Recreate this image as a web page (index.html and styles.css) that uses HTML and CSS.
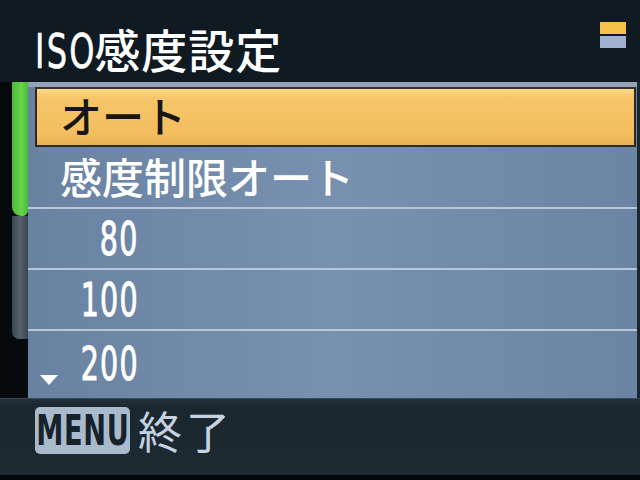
FILE: index.html
```html
<!DOCTYPE html>
<html lang="ja">
<head>
<meta charset="utf-8">
<link rel="stylesheet" href="styles.css">
</head>
<body>
<div class="screen">
  <div class="header">
    <div class="title"><span class="latin">ISO</span>感度設定</div>
    <div class="legend"><div class="sw sw-y"></div><div class="sw sw-b"></div></div>
  </div>
  <div class="main">
    <div class="scroll">
      <div class="thumb"></div>
      <div class="track"></div>
    </div>
    <div class="panel">
      <div class="row selected"><span class="label">オート</span></div>
      <div class="row"><span class="label">感度制限オート</span></div>
      <div class="row"><span class="num"><span class="digits">80</span></span></div>
      <div class="row"><span class="num"><span class="digits">100</span></span></div>
      <div class="row last"><span class="arrow"></span><span class="num"><span class="digits">200</span></span></div>
    </div>
    <div class="edge"></div>
  </div>
  <div class="footer">
    <span class="badge"><span class="badge-text">MENU</span></span>
    <span class="exit">終了</span>
  </div>
  <div class="bottom"></div>
</div>
</body>
</html>
```

FILE: styles.css
```css
body {
  margin: 0;
  background: #000;
}
.screen {
  width: 640px;
  height: 480px;
  background: #0f1a22;
  display: flex;
  flex-direction: column;
  overflow: hidden;
  font-family: "Noto Sans CJK JP", "Noto Sans", sans-serif;
}
.header {
  height: 82px;
  flex: none;
  display: flex;
  justify-content: space-between;
  align-items: flex-start;
  padding: 0 14px 0 35px;
  box-sizing: border-box;
}
.title {
  color: #fff;
  font-size: 46px;
  line-height: 46px;
  margin-top: 25px;
  font-weight: 500;
  letter-spacing: 1px;
  white-space: nowrap;
}
.latin {
  display: inline-block;
  font-family: "DejaVu Sans Condensed", "DejaVu Sans", sans-serif;
  font-size: 48px;
  letter-spacing: 3px;
  transform: scaleX(0.74);
  transform-origin: left center;
  margin-right: -24px;
  -webkit-text-stroke: 0.6px #fff;
}
.legend {
  margin-top: 22px;
  display: flex;
  flex-direction: column;
  gap: 2px;
}
.sw {
  width: 26px;
  height: 12px;
}
.sw-y { background: #f6c24a; }
.sw-b { background: #9fb1cc; }
.main {
  height: 316px;
  flex: none;
  display: flex;
}
.scroll {
  width: 28px;
  flex: none;
  padding-left: 12px;
  box-sizing: border-box;
  background: #060a0d;
  display: flex;
  flex-direction: column;
}
.thumb {
  height: 134px;
  background: linear-gradient(90deg, #4cba38, #66d44c 60%, #4cb83a);
  border-radius: 0 0 5px 9px;
}
.track {
  height: 123px;
  background: linear-gradient(90deg, #3a444e, #56616c 50%, #3c4650);
  border-radius: 0 0 0 7px;
}
.panel {
  width: 609px;
  flex: none;
  background: linear-gradient(90deg, #6a82a2, #7891b0 50%, #6c84a4);
  border-top: 5px solid #93a3ba;
  box-sizing: border-box;
  display: flex;
  flex-direction: column;
  color: #fff;
  font-size: 42px;
  font-weight: 500;
}
.edge {
  flex: 1;
  background: #1a2630;
}
.row {
  height: 61px;
  flex: none;
  box-sizing: border-box;
  display: flex;
  align-items: center;
  padding-left: 32px;
  border-bottom: 2px solid #b9c7dc;
  position: relative;
  white-space: nowrap;
}
.row.selected {
  height: 60px;
  margin-left: 7px;
  margin-right: 1px;
  margin-bottom: 1px;
  padding-left: 23px;
  background: linear-gradient(180deg, #fbd88a 0%, #f6c56a 15%, #f3be5e 80%, #e9b055 100%);
  border: 2px solid #2a2a2a;
  border-top-color: #3a3030;
  color: #161616;
}
.row.last {
  height: 65px;
  border-bottom: none;
}
.label {
  line-height: 1;
  margin-top: -4px;
}
.num {
  display: flex;
  justify-content: flex-end;
  width: 77px;
  line-height: 1;
}
.digits {
  display: inline-block;
  flex: none;
  font-family: "DejaVu Sans", sans-serif;
  font-size: 46px;
  font-weight: 400;
  transform: scaleX(0.62);
  transform-origin: right center;
  letter-spacing: 2px;
  margin-right: -2px;
  -webkit-text-stroke: 1px #fff;
}
.arrow {
  position: absolute;
  left: 12px;
  top: 44px;
  width: 0;
  height: 0;
  border-left: 9px solid transparent;
  border-right: 9px solid transparent;
  border-top: 10px solid #fff;
}
.footer {
  height: 77px;
  flex: none;
  background: linear-gradient(180deg, #24313a, #1b272f 10%, #1d2a32);
  border-top: 1px solid #3a4852;
  box-sizing: border-box;
  display: flex;
  align-items: flex-start;
  padding: 8px 0 0 35px;
  gap: 8px;
}
.badge {
  width: 95px;
  height: 47px;
  background: #a9bacd;
  border-radius: 5px;
  display: flex;
  align-items: center;
  justify-content: center;
}
.badge-text {
  display: inline-block;
  font-family: "DejaVu Sans Condensed", "DejaVu Sans", sans-serif;
  font-size: 42px;
  font-weight: 700;
  color: #17222b;
  transform: scaleX(0.72);
  line-height: 1;
  letter-spacing: 1px;
}
.exit {
  color: #c5d2e0;
  font-size: 44px;
  line-height: 47px;
  letter-spacing: 4px;
}
.bottom {
  flex: 1;
  background: #05080a;
}
```
